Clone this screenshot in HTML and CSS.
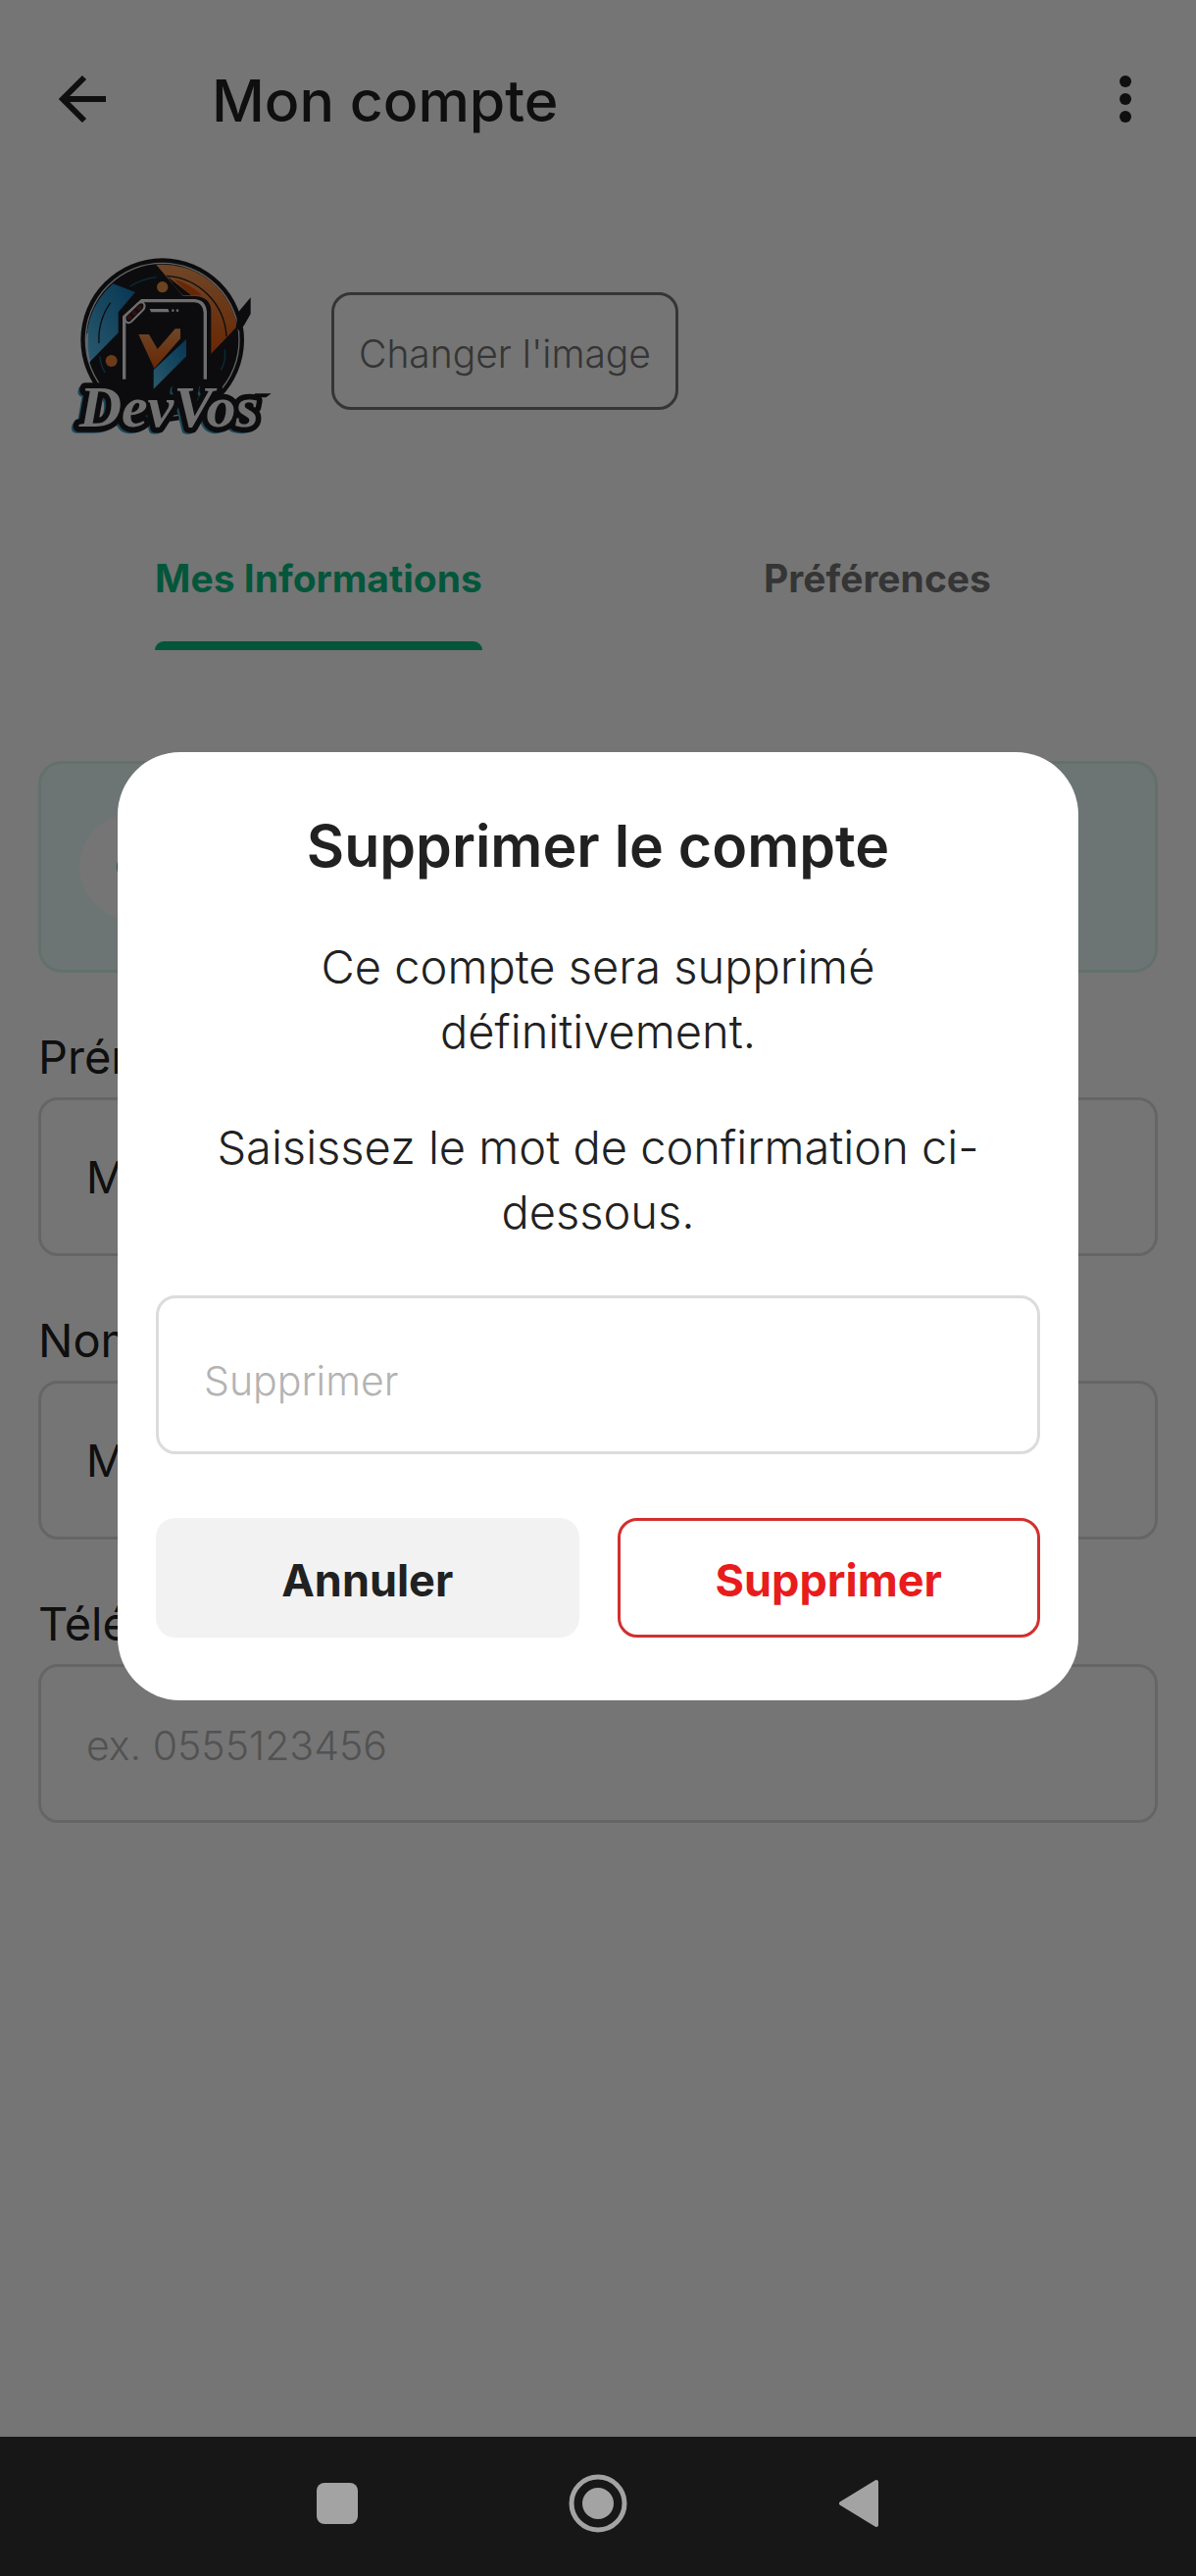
FILE: index.html
```html
<!DOCTYPE html>
<html lang="fr">
<head>
  <meta charset="UTF-8" />
  <meta name="viewport" content="width=device-width, initial-scale=1.0"/>
  <title>Mon compte</title>
  <link rel="stylesheet" href="styles.css">
</head>
<body>
  <div class="screen">
    <header class="topbar">
      <button class="icon-btn" aria-label="Retour">
        <svg width="50" height="50" viewBox="0 0 50 50" fill="none" stroke="currentColor" stroke-width="6">
          <path d="M26 3L4 25l22 22M4 25h44"/>
        </svg>
      </button>
      <h1>Mon compte</h1>
      <button class="icon-btn" aria-label="Menu">
        <svg width="12" height="50" viewBox="0 0 12 50" fill="currentColor">
          <circle cx="6" cy="7" r="6"/><circle cx="6" cy="25" r="6"/><circle cx="6" cy="43" r="6"/>
        </svg>
      </button>
    </header>

    <section class="profile">
      <svg class="logo" width="240" height="220" viewBox="30 24 720 660" role="img" aria-label="DevVos">
        <defs>
          <linearGradient id="blue" x1="0" y1="1" x2="1" y2="0">
            <stop offset="0" stop-color="#5cc4f0"/><stop offset="1" stop-color="#0d75b4"/>
          </linearGradient>
          <linearGradient id="orange" x1="0" y1="0" x2="0" y2="1">
            <stop offset="0" stop-color="#f09a58"/><stop offset="1" stop-color="#e2560a"/>
          </linearGradient>
        </defs>
        <circle cx="347" cy="320" r="250" fill="#1c1c1f"/>
        <circle cx="347" cy="320" r="235" fill="none" stroke="#d8d8d8" stroke-width="4"/>
        <path d="M328 90A231 231 0 0 1 576 278L496 362V230Q494 190 450 186H410Z" fill="url(#orange)"/>
        <path d="M362 126L436 184H410Q385 160 362 126Z" fill="#1c1c1f"/>
        <path d="M382 134Q430 146 468 184L436 184Z" fill="#e2560a"/>
        <path d="M196 148A231 231 0 0 0 124 388L212 298V235L264 174Z" fill="url(#blue)"/>
        <path d="M124 388A231 231 0 0 1 118 300" fill="none" stroke="#d8e8f0" stroke-width="5"/>
        <path d="M360 124A196 196 0 0 1 543 310M188 206A196 196 0 0 0 153 330" fill="none" stroke="#1c1c1f" stroke-width="4"/>
        <path d="M248 156A196 196 0 0 1 328 128M538 350Q542 385 526 412M156 370Q158 400 172 420" fill="none" stroke="#16637c" stroke-width="4"/>
        <path d="M572 282L578 236L617 190V240L598 274L582 292Z" fill="#1c1c1f"/>
        <circle cx="347" cy="158" r="17" fill="#ec9044"/>
        <circle cx="191" cy="384" r="18" fill="#ec8034"/>
        <path d="M230 440V250L284 200H445Q476 202 478 236V440" fill="#1c1c1f" stroke="#f0f0f0" stroke-width="10"/>
        <path d="M232 248L274 208Q286 200 292 212Q294 222 288 228L252 264Q242 272 234 262Z" fill="#1c1c1f" stroke="#f0f0f0" stroke-width="6"/>
        <circle cx="246" cy="251" r="8" fill="#622"/><circle cx="261" cy="237" r="8" fill="#622"/><circle cx="276" cy="222" r="8" fill="#622"/>
        <path d="M308 225H364L368 235H312Z" fill="#f0f0f0"/>
        <circle cx="379" cy="230" r="4" fill="#ddd"/><circle cx="393" cy="230" r="4" fill="#ddd"/>
        <path d="M274 303H306L332 348L386 286H402V316L322 407Z" fill="url(#orange)"/>
        <path d="M420 318V370L320 470V412Z" fill="url(#blue)"/>
        <g class="logo-name">
          <text class="name-glow" x="84" y="592">DevVos</text>
          <text class="name-edge" x="92" y="584">DevVos</text>
          <text class="name-face" x="92" y="584">DevVos</text>
        </g>
        <path d="M630 484H680L664 496H626Z" fill="#1c1c1f"/>
      </svg>
      <button class="change-btn">Changer l'image</button>
    </section>

    <nav class="tabs" role="tablist">
      <button class="tab active" role="tab" aria-selected="true">Mes Informations</button>
      <button class="tab" role="tab" aria-selected="false">Préférences</button>
    </nav>

    <div class="banner">
      <div class="banner-icon">
        <svg width="32" height="32" viewBox="0 0 34 34" fill="none" stroke="currentColor" stroke-width="4">
          <circle cx="17" cy="17" r="15"/><path d="M17 9v2M17 15v10"/>
        </svg>
      </div>
    </div>

    <form class="form">
      <div class="field">
        <label for="firstName">Prénom</label>
        <input id="firstName" type="text" value="M">
      </div>
      <div class="field">
        <label for="lastName">Nom</label>
        <input id="lastName" type="text" value="M">
      </div>
      <div class="field">
        <label for="phone">Téléphone</label>
        <input id="phone" type="tel" placeholder="ex. 0555123456">
      </div>
    </form>

    <div class="overlay">
      <div class="modal" role="dialog" aria-modal="true" aria-labelledby="modalTitle">
        <h2 id="modalTitle">Supprimer le compte</h2>
        <p>Ce compte sera supprimé définitivement.</p>
        <p>Saisissez le mot de confirmation ci-dessous.</p>
        <input id="confirmWord" type="text" placeholder="Supprimer" aria-label="Mot de confirmation">
        <div class="actions">
          <button class="btn cancel">Annuler</button>
          <button class="btn delete">Supprimer</button>
        </div>
      </div>
    </div>
  </div>

  <footer class="navbar">
    <button class="nav-btn" aria-label="Applications récentes">
      <svg width="60" height="60" viewBox="0 0 60 60" fill="currentColor"><rect x="9" y="9" width="42" height="42" rx="8"/></svg>
    </button>
    <button class="nav-btn" aria-label="Accueil">
      <svg width="60" height="60" viewBox="0 0 60 60" fill="currentColor">
        <circle cx="30" cy="30" r="27" fill="none" stroke="currentColor" stroke-width="5"/><circle cx="30" cy="30" r="16"/>
      </svg>
    </button>
    <button class="nav-btn" aria-label="Retour système">
      <svg width="60" height="60" viewBox="0 0 60 60" fill="currentColor" stroke="currentColor" stroke-width="4" stroke-linejoin="round">
        <path d="M12 30L48 8V52Z"/>
      </svg>
    </button>
  </footer>
</body>
</html>
```
FILE: styles.css
```css
* {
  box-sizing: border-box;
}
body {
  margin: 0;
  min-height: 100vh;
  display: flex;
  flex-direction: column;
  font-family: Inter, "Open Sans", sans-serif;
  color: #212121;
  background: #fff;
}
button, input {
  font-family: inherit;
  color: inherit;
}
button {
  padding: 0;
  border: none;
  background: none;
  cursor: pointer;
}
h1, h2, p {
  margin: 0;
}
.screen {
  position: relative;
  flex: 1;
}

/* header */
.topbar {
  display: flex;
  align-items: center;
  height: 202px;
  padding: 0 66px 0 60px;
}
.topbar h1 {
  flex: 1;
  margin-left: 106px;
  padding-top: 4px;
  font-size: 59px;
  font-weight: 500;
  line-height: 76px;
}
.icon-btn {
  display: flex;
}

/* profile */
.profile {
  display: flex;
  align-items: center;
  gap: 38px;
  margin-top: 46px;
  padding: 0 60px;
}
.logo-name {
  font-family: "Liberation Serif", serif;
  font-size: 180px;
  font-weight: bold;
  font-style: italic;
}
.name-glow {
  fill: #3a9dc0;
  stroke: #3a9dc0;
  stroke-width: 28px;
  stroke-linejoin: round;
}
.name-edge {
  fill: #1c1c1f;
  stroke: #1c1c1f;
  stroke-width: 34px;
  stroke-linejoin: round;
}
.name-face {
  fill: #f4f4f4;
}
.change-btn {
  height: 120px;
  padding: 4px 25px 0;
  border: 3px solid #757575;
  border-radius: 20px;
  font-size: 39px;
  font-weight: 300;
  color: #757575;
}

/* tabs */
.tabs {
  display: grid;
  grid-template-columns: 1fr 1fr;
  justify-items: center;
  margin-top: 47px;
  padding: 0 40px;
}
.tab {
  position: relative;
  height: 148px;
  font-size: 39px;
  font-weight: 700;
  color: #757575;
}
.tab.active {
  color: #0abb80;
}
.tab.active::after {
  content: "";
  position: absolute;
  left: 0;
  right: 0;
  bottom: 0;
  height: 9px;
  border-radius: 9px 9px 0 0;
  background: #0abb80;
}

/* banner */
.banner {
  margin: 113px 39px 0;
  padding: 51px 39px;
  border: 3px solid #d8f4ea;
  border-radius: 24px;
  background: #ebfffa;
}
.banner-icon {
  display: flex;
  align-items: center;
  justify-content: center;
  width: 108px;
  height: 108px;
  border-radius: 50%;
  background: #fff;
  color: #0abb80;
}

/* form */
.form {
  display: flex;
  flex-direction: column;
  gap: 56px;
  margin-top: 56px;
  padding: 0 39px;
}
.field label {
  display: block;
  margin-bottom: 11px;
  font-size: 47px;
  font-weight: 400;
  line-height: 60px;
}
input {
  display: block;
  width: 100%;
  height: 162px;
  padding: 0 46px;
  border: 3px solid #dcdcdc;
  border-radius: 20px;
  background: #fff;
  font-size: 45px;
  outline: none;
}
input::placeholder {
  font-size: 41px;
  font-weight: 300;
  color: #b3b3b3;
  opacity: 1;
}

/* dialog */
.overlay {
  position: absolute;
  inset: 0;
  display: flex;
  align-items: center;
  padding: 16px 120px 0;
  background: rgba(0, 0, 0, 0.54);
}
.modal {
  width: 100%;
  padding: 58px 39px 64px;
  border-radius: 64px;
  background: #fff;
  text-align: center;
}
.modal h2 {
  font-size: 59px;
  font-weight: 600;
  line-height: 76px;
}
.modal p {
  margin: 52px 0;
  padding: 0 24px;
  font-size: 47px;
  font-weight: 300;
  line-height: 66px;
}
.modal input {
  padding-top: 8px;
}
.actions {
  display: grid;
  grid-template-columns: 1fr 1fr;
  gap: 39px;
  margin-top: 65px;
}
.btn {
  height: 122px;
  padding-top: 4px;
  border-radius: 20px;
  font-size: 45px;
  font-weight: 700;
}
.cancel {
  background: #f2f2f2;
}
.delete {
  border: 3px solid #d32f2f;
  color: #e81c1c;
}

/* system bar */
.navbar {
  display: flex;
  align-items: center;
  justify-content: center;
  gap: 206px;
  height: 142px;
  padding-bottom: 7px;
  background: #171717;
  color: #a3a3a3;
}
.nav-btn {
  display: flex;
}
```
